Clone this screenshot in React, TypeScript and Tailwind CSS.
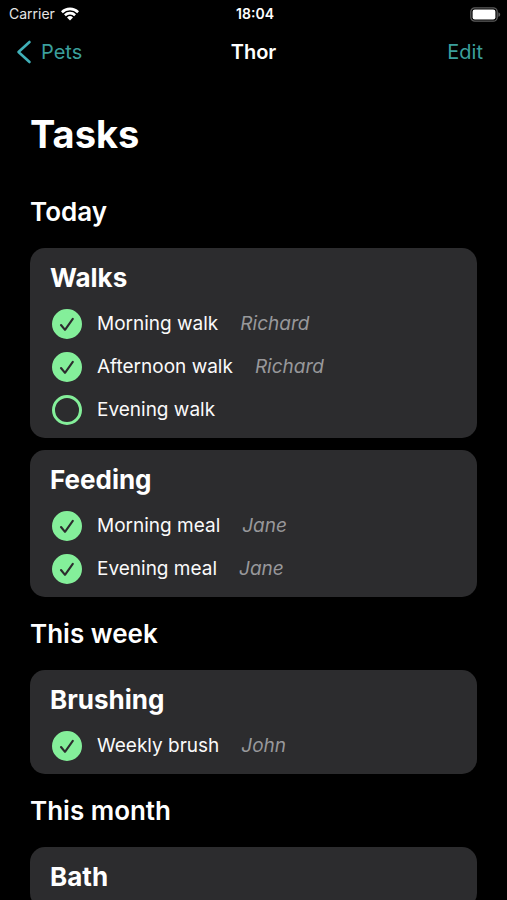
import * as React from 'react';

interface Task {
  id: string;
  label: string;
  done: boolean;
  person?: string;
}

interface TaskGroup {
  title: string;
  tasks: Task[];
}

interface Section {
  title: string;
  groups: TaskGroup[];
}

const SECTIONS: Section[] = [
  {
    title: 'Today',
    groups: [
      {
        title: 'Walks',
        tasks: [
          { id: 'morning-walk', label: 'Morning walk', done: true, person: 'Richard' },
          { id: 'afternoon-walk', label: 'Afternoon walk', done: true, person: 'Richard' },
          { id: 'evening-walk', label: 'Evening walk', done: false },
        ],
      },
      {
        title: 'Feeding',
        tasks: [
          { id: 'morning-meal', label: 'Morning meal', done: true, person: 'Jane' },
          { id: 'evening-meal', label: 'Evening meal', done: true, person: 'Jane' },
        ],
      },
    ],
  },
  {
    title: 'This week',
    groups: [
      {
        title: 'Brushing',
        tasks: [{ id: 'weekly-brush', label: 'Weekly brush', done: true, person: 'John' }],
      },
    ],
  },
  {
    title: 'This month',
    groups: [{ title: 'Bath', tasks: [] }],
  },
];

function StatusBar() {
  return (
    <div className="grid h-7 grid-cols-3 items-center pl-[9px] pr-[6px] text-[14px] leading-none">
      <div className="flex items-center gap-[6px] text-neutral-200">
        <span>Carrier</span>
        <svg viewBox="0 0 18 14" className="h-[14px] w-[18px]" aria-hidden="true">
          <path d="M0 4.2a12.8 12.8 0 0 1 18 0l-1.8 2a10.2 10.2 0 0 0-14.4 0z" fill="white" />
          <path d="M3 7.3a8.6 8.6 0 0 1 12 0l-1.8 2a6 6 0 0 0-8.4 0z" fill="white" />
          <path d="M6 10.4a4.3 4.3 0 0 1 6 0l-3 3.2z" fill="white" />
        </svg>
      </div>
      <span className="text-center text-[14px] font-semibold">18:04</span>
      <svg viewBox="0 0 31 15" className="h-[15px] w-[31px] justify-self-end" aria-hidden="true">
        <rect x="0.8" y="0.8" width="26.4" height="13.4" rx="4" fill="none" stroke="#5c5c5c" strokeWidth="1.3" />
        <rect x="2.6" y="2.6" width="22.8" height="9.8" rx="2.2" fill="white" />
        <path d="M28.4 5.2v4.6c1.1-.4 1.8-1.3 1.8-2.3s-.7-1.9-1.8-2.3z" fill="#5c5c5c" />
      </svg>
    </div>
  );
}

function NavBar() {
  return (
    <header className="grid h-12 grid-cols-3 items-center pl-4 pr-6 text-[20px]">
      <a href="#pets" className="flex items-center gap-[9px] text-[#3b9f9c]">
        <svg viewBox="0 0 16 24" className="h-6 w-4" fill="none" aria-hidden="true">
          <path d="M13.5 2 2.5 12l11 10" stroke="#40b0b8" strokeWidth="2.6" strokeLinecap="round" strokeLinejoin="round" />
        </svg>
        Pets
      </a>
      <h2 className="pl-2 text-center font-semibold">Thor</h2>
      <button type="button" className="justify-self-end text-[#3b9f9c]">
        Edit
      </button>
    </header>
  );
}

function TaskRow({ task }: { task: Task }) {
  const [done, setDone] = React.useState(task.done);

  return (
    <li className="flex h-[43px] items-center">
      <span className="relative size-[30px] shrink-0">
        <input
          id={task.id}
          type="checkbox"
          checked={done}
          onChange={(e) => setDone(e.target.checked)}
          className="block size-full appearance-none rounded-full border-3 border-[#84ef9a] checked:bg-[#84ef9a]"
        />
        {done && (
          <svg viewBox="0 0 30 30" className="pointer-events-none absolute inset-0" fill="none" aria-hidden="true">
            <path d="M9 16l4 4.8 7.8-11" stroke="#2c2c2e" strokeWidth="2.1" strokeLinecap="round" strokeLinejoin="round" />
          </svg>
        )}
      </span>
      <label htmlFor={task.id} className="ml-[15px] text-neutral-50">
        {task.label}
      </label>
      {task.person && <span className="ml-[22px] italic text-[#98989b]">{task.person}</span>}
    </li>
  );
}

function TaskCard({ group }: { group: TaskGroup }) {
  return (
    <article className="rounded-[15px] bg-[#2c2c2e] px-5 pb-[7px] pt-3">
      <h3 className="mb-[6px] text-[26px] font-bold leading-9">{group.title}</h3>
      <ul className="pl-[2px] text-[19px] leading-7">
        {group.tasks.map((task) => (
          <TaskRow key={task.id} task={task} />
        ))}
      </ul>
    </article>
  );
}

export default function App() {
  return (
    <div className="flex h-screen flex-col overflow-hidden bg-black font-['Inter','Liberation_Sans',sans-serif] text-white">
      <StatusBar />
      <NavBar />
      <main className="min-h-0 flex-1 overflow-y-auto px-[30px] [scrollbar-width:none]">
        <h1 className="mb-[38px] mt-[34px] text-[38px] font-bold leading-[48px]">Tasks</h1>
        {SECTIONS.map((section) => (
          <section key={section.title} className="pb-[21px]">
            <h2 className="mb-5 text-[26px] font-semibold leading-8">{section.title}</h2>
            <div className="flex flex-col gap-3">
              {section.groups.map((group) => (
                <TaskCard key={group.title} group={group} />
              ))}
            </div>
          </section>
        ))}
      </main>
    </div>
  );
}
